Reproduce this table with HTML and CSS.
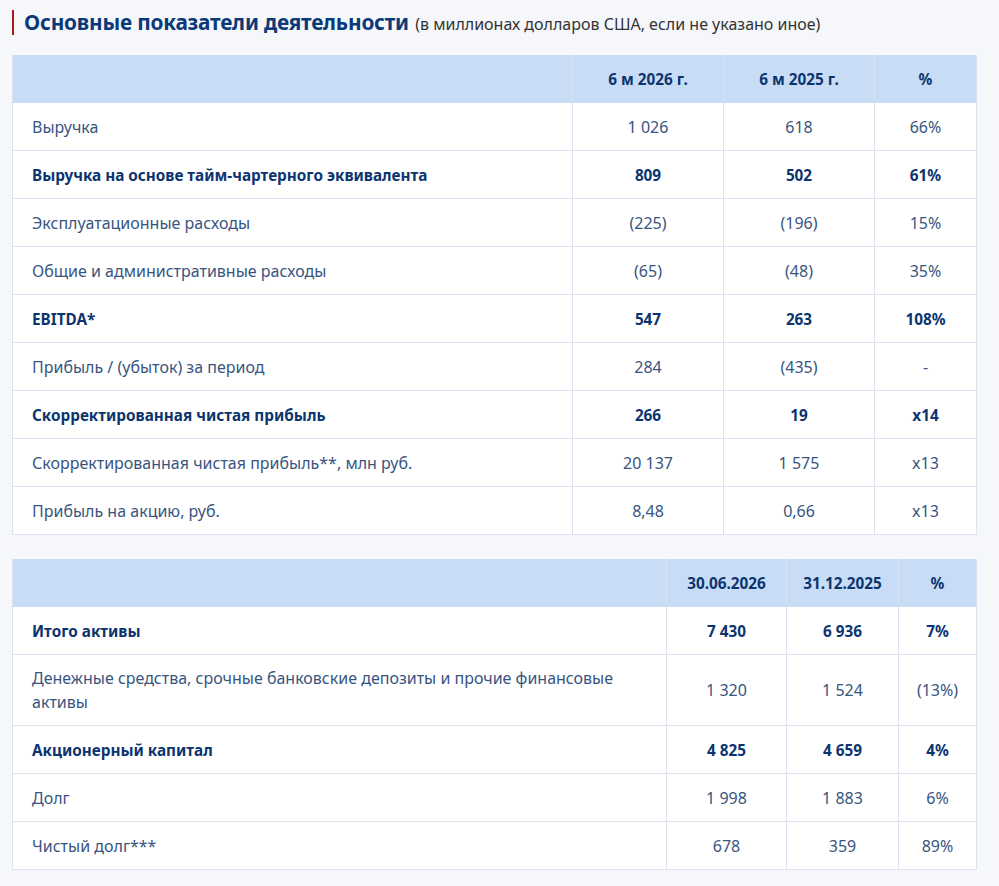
FILE: index.html
```html
<!DOCTYPE html>
<html lang="ru">
<head>
<meta charset="utf-8">
<link rel="stylesheet" href="styles.css">
</head>
<body>
<div class="page">
  <h2 class="title"><span class="title-main">Основные показатели деятельности</span> <span class="title-sub">(в миллионах долларов США, если не указано иное)</span></h2>

  <table class="data t1">
    <colgroup><col class="c-label"><col class="c-a"><col class="c-b"><col class="c-p"></colgroup>
    <thead>
      <tr><th></th><th>6 м 2026 г.</th><th>6 м 2025 г.</th><th>%</th></tr>
    </thead>
    <tbody>
      <tr><td>Выручка</td><td>1 026</td><td>618</td><td>66%</td></tr>
      <tr class="b"><td>Выручка на основе тайм-чартерного эквивалента</td><td>809</td><td>502</td><td>61%</td></tr>
      <tr><td>Эксплуатационные расходы</td><td>(225)</td><td>(196)</td><td>15%</td></tr>
      <tr><td>Общие и административные расходы</td><td>(65)</td><td>(48)</td><td>35%</td></tr>
      <tr class="b"><td>EBITDA*</td><td>547</td><td>263</td><td>108%</td></tr>
      <tr><td>Прибыль / (убыток) за период</td><td>284</td><td>(435)</td><td>-</td></tr>
      <tr class="b"><td>Скорректированная чистая прибыль</td><td>266</td><td>19</td><td>x14</td></tr>
      <tr><td>Скорректированная чистая прибыль**, млн руб.</td><td>20 137</td><td>1 575</td><td>x13</td></tr>
      <tr><td>Прибыль на акцию, руб.</td><td>8,48</td><td>0,66</td><td>x13</td></tr>
    </tbody>
  </table>

  <table class="data t2">
    <colgroup><col class="c-label"><col class="c-a"><col class="c-b"><col class="c-p"></colgroup>
    <thead>
      <tr><th></th><th>30.06.2026</th><th>31.12.2025</th><th>%</th></tr>
    </thead>
    <tbody>
      <tr class="b"><td>Итого активы</td><td>7 430</td><td>6 936</td><td>7%</td></tr>
      <tr class="tall"><td>Денежные средства, срочные банковские депозиты и прочие финансовые активы</td><td>1 320</td><td>1 524</td><td>(13%)</td></tr>
      <tr class="b"><td>Акционерный капитал</td><td>4 825</td><td>4 659</td><td>4%</td></tr>
      <tr><td>Долг</td><td>1 998</td><td>1 883</td><td>6%</td></tr>
      <tr><td>Чистый долг***</td><td>678</td><td>359</td><td>89%</td></tr>
    </tbody>
  </table>
</div>
</body>
</html>
```

FILE: styles.css
```css
html, body {
  margin: 0;
  padding: 0;
  background: #f6f7fb;
}
body {
  font-family: "Noto Sans", "Open Sans", sans-serif;
  color: #38557f;
}
.page {
  padding: 10px 22px 0 12px;
}
.title {
  margin: 0 0 20px 0;
  padding-left: 10px;
  border-left: 2px solid #b5121b;
  line-height: 22px;
  font-weight: normal;
  white-space: nowrap;
}
.title-main {
  font-size: 20.8px;
  font-weight: 700;
  color: #0b3a78;
  letter-spacing: -0.2px;
}
.title-sub {
  font-size: 16px;
  color: #333;
}
.data {
  width: 965px;
  border-collapse: collapse;
  background: #fff;
  table-layout: fixed;
  font-size: 16px;
}
.data th, .data td {
  border: 1px solid #dde1f0;
  text-align: center;
  vertical-align: middle;
  padding: 0 10px;
  height: 47px;
}
.data th {
  background: #c8ddf5;
  color: #0c3570;
  font-weight: 700;
  font-size: 15.3px;
  height: 46px;
  border-color: #c8ddf5 #d8e3f3;
}
.data td:first-child {
  text-align: left;
  padding-left: 19px;
  padding-right: 20px;
}
.data tr.b td {
  font-weight: 700;
  font-size: 15.3px;
  color: #0c3570;
}
.data tr.tall td {
  height: 70px;
  line-height: 24px;
}
.t1 .c-a, .t1 .c-b { width: 151px; }
.t1 .c-p { width: 102px; }
.t2 { margin-top: 24px; }
.t2 .c-a { width: 120px; }
.t2 .c-b { width: 112px; }
.t2 .c-p { width: 78px; }
```
